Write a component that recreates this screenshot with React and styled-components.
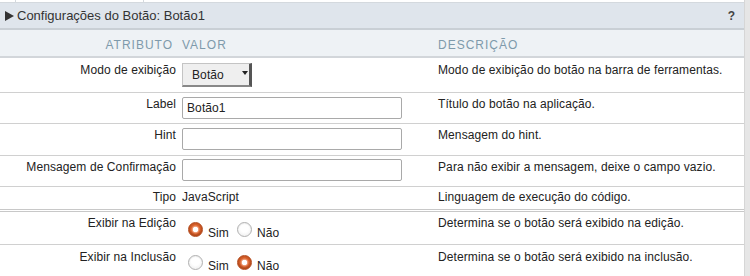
import React from 'react';
import styled, { createGlobalStyle } from 'styled-components';

const GlobalStyle = createGlobalStyle`
  *, *::before, *::after { box-sizing: border-box; }
  body {
    margin: 0;
    background: #fff;
    font-family: 'Liberation Sans', Arial, sans-serif;
    color: #222;
  }
`;

const Page = styled.div`
  display: flex;
  width: 750px;
  height: 276px;
  overflow: hidden;
`;

const Panel = styled.div`
  flex: 1;
  display: flex;
  flex-direction: column;
`;

const Scroll = styled.div`
  width: 6px;
  background: #e6e6e6;
  border-left: 1px solid #d6d6d6;
`;

const TopStrip = styled.div`
  height: 3px;
  flex: none;
  border-bottom: 1px solid #d4d9de;
  display: grid;
  grid-template-columns: 15px 128px 1fr;
  > span + span {
    border-left: 1px solid #d4d9de;
  }
`;

const TitleBar = styled.div`
  height: 27px;
  flex: none;
  background: #dfe5ec;
  border-bottom: 2px solid #c9cfd5;
  display: flex;
  align-items: center;
  padding: 0 9px 0 5px;
  font-size: 13px;
  color: #333;
`;

const Arrow = styled.span`
  width: 0;
  height: 0;
  border-top: 5px solid transparent;
  border-bottom: 5px solid transparent;
  border-left: 9px solid #333;
  margin-right: 3px;
`;

const Help = styled.span`
  margin-left: auto;
  font-weight: bold;
  font-size: 12px;
  color: #444;
`;

const Row = styled.div`
  display: grid;
  grid-template-columns: 176px 250px 1fr;
  column-gap: 6px;
  height: ${p => p.h}px;
  flex: none;
  border-bottom: ${p => (p.double ? '3px double #c8c8c8' : '1px solid #d0d0d0')};
  font-size: 12px;
  letter-spacing: 0.1px;
`;

const HeadRow = styled(Row)`
  background: #eef2f5;
  color: #7e9aab;
  letter-spacing: 1px;
  border-bottom: 2px solid #d2d6da;
  padding-top: 8px;
`;

const Attr = styled.div`
  text-align: right;
  padding-top: ${p => p.pt || 0}px;
  padding-right: ${p => p.pr || 0}px;
`;

const Value = styled.div`
  display: flex;
  align-items: flex-start;
  padding-top: ${p => p.pt || 0}px;
`;

const Desc = styled.div`
  padding-top: ${p => p.pt || 0}px;
`;

const TextBox = styled.div`
  width: 220px;
  height: 22px;
  border: 1px solid #a9a9a9;
  border-radius: 2px;
  background: #fff;
  font-size: 12px;
  padding: 3px 4px;
`;

const Select = styled.div`
  width: 70px;
  height: 24px;
  background: #efefef;
  border: 1px solid #c4c4c4;
  border-right: 3px solid #555;
  border-bottom: 2px solid #888;
  display: flex;
  align-items: center;
  justify-content: space-between;
  padding: 0 1px 0 9px;
  font-size: 12px;
`;

const Caret = styled.span`
  width: 0;
  height: 0;
  border-left: 3px solid transparent;
  border-right: 3px solid transparent;
  border-top: 4px solid #222;
  margin-bottom: 4px;
`;

const RadioGroup = styled.div`
  display: flex;
  align-items: flex-start;
  padding-top: 10px;
  padding-left: 6px;
`;

const RadioLabel = styled.span`
  display: flex;
  align-items: flex-start;
  margin-right: 8px;
  font-size: 12px;
`;

const RadioText = styled.span`
  padding-top: 4px;
  margin-left: 5px;
`;

const Radio = styled.span`
  width: 15px;
  height: 15px;
  flex: none;
  border-radius: 50%;
  border: 1px solid ${p => (p.on ? '#b24a1e' : '#b0b0b0')};
  background: ${p =>
    p.on
      ? 'radial-gradient(circle, #fff 0 2.5px, #f0a07a 3px, #d9622e 4.5px, #c9551f 7px)'
      : 'radial-gradient(circle at 50% 40%, #fff 0 4px, #f4f4f4 7px)'};
  box-shadow: ${p => (p.on ? 'inset 0 -1px 2px rgba(110,35,0,0.45)' : 'inset 0 1px 1px rgba(0,0,0,0.06)')};
`;

const Choice = ({ on, children }) => (
  <RadioLabel>
    <Radio on={on ? 1 : 0} />
    <RadioText>{children}</RadioText>
  </RadioLabel>
);

export default function App() {
  return (
    <Page>
      <GlobalStyle />
      <Panel>
        <TopStrip>
          <span />
          <span />
          <span />
        </TopStrip>
        <TitleBar>
          <Arrow />
          Configurações do Botão: Botão1
          <Help>?</Help>
        </TitleBar>
        <HeadRow h={28}>
          <Attr pr={3}>ATRIBUTO</Attr>
          <Value>VALOR</Value>
          <Desc>DESCRIÇÃO</Desc>
        </HeadRow>
        <Row h={35}>
          <Attr pt={5}>Modo de exibição</Attr>
          <Value pt={5}>
            <Select>
              Botão
              <Caret />
            </Select>
          </Value>
          <Desc pt={5}>Modo de exibição do botão na barra de ferramentas.</Desc>
        </Row>
        <Row h={31}>
          <Attr pt={4}>Label</Attr>
          <Value pt={4}>
            <TextBox>Botão1</TextBox>
          </Value>
          <Desc pt={4}>Título do botão na aplicação.</Desc>
        </Row>
        <Row h={32}>
          <Attr pt={4}>Hint</Attr>
          <Value pt={4}>
            <TextBox />
          </Value>
          <Desc pt={4}>Mensagem do hint.</Desc>
        </Row>
        <Row h={31}>
          <Attr pt={4}>Mensagem de Confirmação</Attr>
          <Value pt={3}>
            <TextBox />
          </Value>
          <Desc pt={4}>Para não exibir a mensagem, deixe o campo vazio.</Desc>
        </Row>
        <Row h={25} double>
          <Attr pt={3}>Tipo</Attr>
          <Value pt={3}>JavaScript</Value>
          <Desc pt={3}>Linguagem de execução do código.</Desc>
        </Row>
        <Row h={33}>
          <Attr pt={4}>Exibir na Edição</Attr>
          <RadioGroup>
            <Choice on>Sim</Choice>
            <Choice>Não</Choice>
          </RadioGroup>
          <Desc pt={4}>Determina se o botão será exibido na edição.</Desc>
        </Row>
        <Row h={40}>
          <Attr pt={5}>Exibir na Inclusão</Attr>
          <RadioGroup>
            <Choice>Sim</Choice>
            <Choice on>Não</Choice>
          </RadioGroup>
          <Desc pt={5}>Determina se o botão será exibido na inclusão.</Desc>
        </Row>
      </Panel>
      <Scroll />
    </Page>
  );
}
